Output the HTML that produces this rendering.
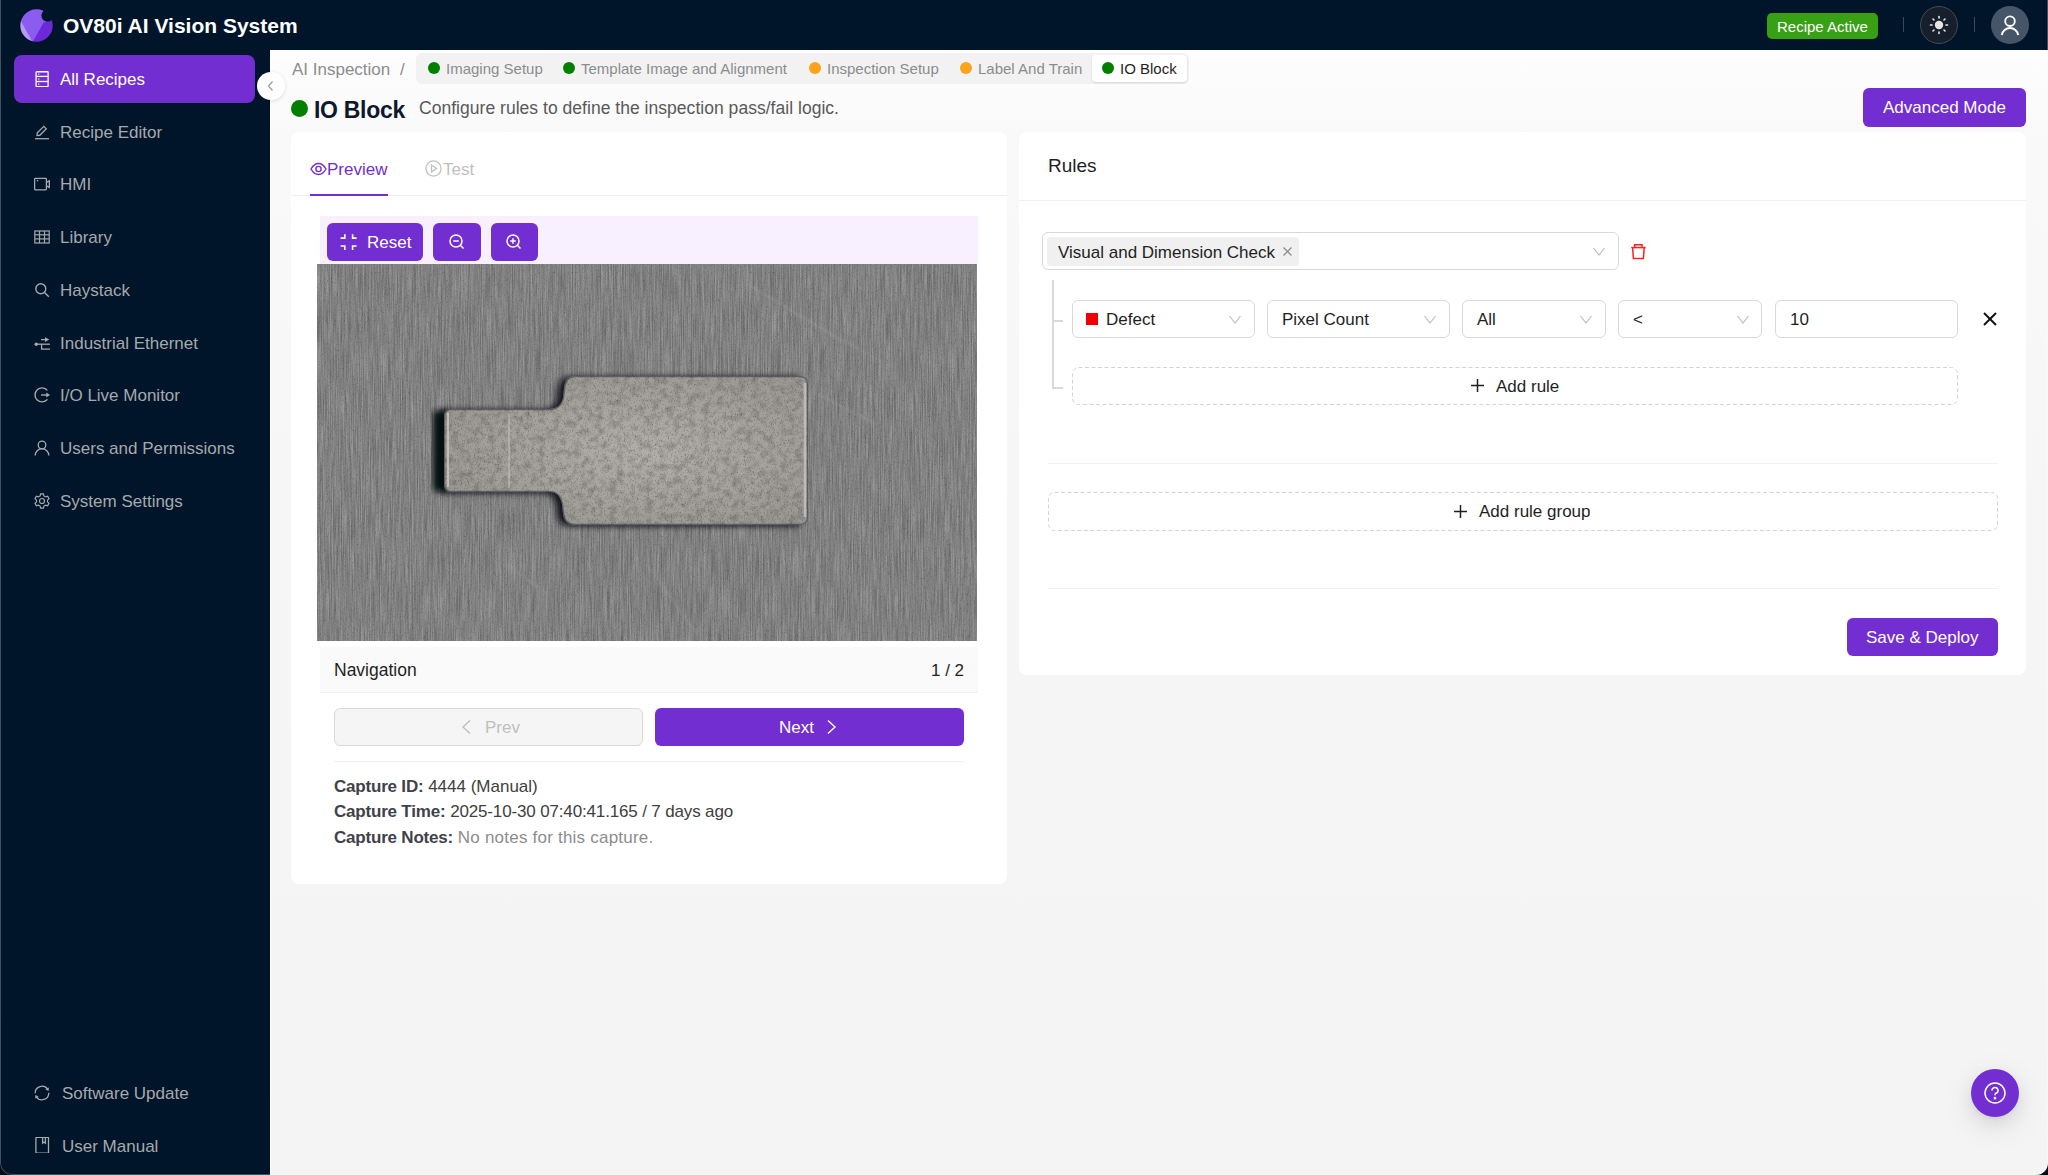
<!DOCTYPE html>
<html><head><meta charset="utf-8">
<style>
*{box-sizing:border-box;margin:0;padding:0}
html,body{width:2048px;height:1175px;overflow:hidden;background:#070b14}
body{font-family:"Liberation Sans",sans-serif;position:relative;color:rgba(0,0,0,0.88)}
.abs{position:absolute}
#frame{position:absolute;left:0;top:0;width:2048px;height:1175px;overflow:hidden;border-radius:0 0 12px 12px;background:#001529}
#wborder{position:absolute;left:0;top:0;width:2048px;height:1175px;border:1px solid rgba(255,255,255,0.25);border-top:none;border-radius:0 0 12px 12px;z-index:50;pointer-events:none}
#edgeL{position:absolute;left:0;top:0;width:2px;height:1175px;background:#4a4f55}
#edgeR{position:absolute;right:0;top:0;width:2px;height:50px;background:#4a4f55}
#header{position:absolute;left:0;top:0;width:2048px;height:50px;background:#001529}
#main{position:absolute;left:270px;top:50px;width:1778px;height:1125px;background:linear-gradient(#ffffff 0px,#fdfdfd 12px,#f9f9f9 85px,#f6f6f6 450px,#f4f4f4 1125px);border-left:1px solid #fff;border-top:1px solid #fff}
.menu{position:absolute;left:14px;width:241px;height:48px;border-radius:8px;color:#a6a9ad;font-size:17px}
.menu .ic{position:absolute;left:20px;top:16px;width:16px;height:16px}
.menu .tx{position:absolute;left:46px;top:15px;line-height:20px;white-space:nowrap}
.menu.active{background:#722ed1;color:#fff}
.t{position:absolute;white-space:nowrap;line-height:1}
.card{position:absolute;background:#fff;border-radius:8px}
.btnp{position:absolute;background:#722ed1;border-radius:6px;color:#fff}
.sel{position:absolute;height:38px;border:1px solid #d9d9d9;border-radius:6px;background:#fff}
.chev{position:absolute;width:12px;height:9px}
.dot{position:absolute;border-radius:50%}
</style></head><body>
<div id="frame">
<div id="header">
  <svg class="abs" style="left:19.5px;top:8.5px" width="33" height="33" viewBox="0 0 33 33">
    <defs><mask id="lm"><rect width="33" height="33" fill="#000"/><circle cx="16.5" cy="16.5" r="16.2" fill="#fff"/><circle cx="27.6" cy="6.6" r="6.2" fill="#000"/></mask></defs>
    <g mask="url(#lm)">
      <rect width="33" height="33" fill="#8b5cf0"/>
      <path d="M0 10.5 L12.5 33 L0 33Z" fill="#b89af2"/>
      <path d="M33 11 L33 33 L12.6 33 L23.6 13.4Z" fill="#6d28d9"/>
    </g>
  </svg>
  <div class="t" style="left:63px;top:15px;font-size:21px;font-weight:700;color:#fff">OV80i AI Vision System</div>
  <div class="abs" style="left:1767px;top:13px;width:111px;height:26px;background:#38a014;border-radius:5px"></div>
  <div class="t" style="left:1777px;top:18.5px;font-size:15px;color:#fff">Recipe Active</div>
  <div class="abs" style="left:1903px;top:17px;width:1px;height:15px;background:#3b4756"></div>
  <div class="abs" style="left:1920px;top:6px;width:38px;height:38px;border-radius:50%;background:#161f2b;border:1px solid #454b53"></div>
  <svg class="abs" style="left:1928px;top:14px" width="22" height="22" viewBox="0 0 22 22">
    <circle cx="11" cy="11" r="4.2" fill="#e5e5e5"/>
    <g stroke="#e5e5e5" stroke-width="1.6" stroke-linecap="round">
      <line x1="11" y1="2.5" x2="11" y2="4"/><line x1="11" y1="18" x2="11" y2="19.5"/>
      <line x1="2.5" y1="11" x2="4" y2="11"/><line x1="18" y1="11" x2="19.5" y2="11"/>
      <line x1="5" y1="5" x2="6" y2="6"/><line x1="16" y1="16" x2="17" y2="17"/>
      <line x1="17" y1="5" x2="16" y2="6"/><line x1="5" y1="17" x2="6" y2="16"/>
    </g>
  </svg>
  <div class="abs" style="left:1974px;top:17px;width:1px;height:15px;background:#3b4756"></div>
  <div class="abs" style="left:1991px;top:6px;width:38px;height:38px;border-radius:50%;background:#475569"></div>
  <svg class="abs" style="left:1998px;top:13px" width="24" height="24" viewBox="0 0 24 24" fill="none" stroke="#fff" stroke-width="1.9">
    <circle cx="12" cy="8.2" r="4.8"/>
    <path d="M3.8 22 A8.3 8.3 0 0 1 20.2 22"/>
  </svg>
</div>



<!-- sidebar menu -->
<div class="menu active" style="top:55px">
  <svg class="ic" viewBox="0 0 16 16" fill="none" stroke="#fff" stroke-width="1.3"><rect x="2.1" y="0.75" width="12" height="14.8" rx="0.6"/><line x1="2.1" y1="5.4" x2="14.1" y2="5.4"/><line x1="2.1" y1="10.5" x2="14.1" y2="10.5"/><path d="M4.3 2.2 L5.8 3.1 L4.3 4Z" fill="#fff" stroke="none"/><path d="M4.3 7.2 L5.8 8.1 L4.3 9Z" fill="#fff" stroke="none"/><path d="M4.3 12.2 L5.8 13.1 L4.3 14Z" fill="#fff" stroke="none"/></svg>
  <div class="tx">All Recipes</div>
</div>
<div class="menu" style="top:107.7px">
  <svg class="ic" viewBox="0 0 16 16" fill="none" stroke="#a6a9ad" stroke-width="1.3"><path d="M3 11.5 L3.3 8.8 L9.8 2.3 L12.3 4.8 L5.8 11.3Z"/><line x1="1" y1="14.7" x2="15" y2="14.7"/></svg>
  <div class="tx">Recipe Editor</div>
</div>
<div class="menu" style="top:160.4px">
  <svg class="ic" viewBox="0 0 16 16" fill="none" stroke="#a6a9ad" stroke-width="1.3"><rect x="0.6" y="2.3" width="11.8" height="11.6" rx="0.8"/><path d="M12.4 6.3 L15.3 4.8 L15.3 11.4 L12.4 9.9"/><path d="M2.8 4.6 L4.2 4.6" stroke-width="1.5"/></svg>
  <div class="tx">HMI</div>
</div>
<div class="menu" style="top:213.1px">
  <svg class="ic" viewBox="0 0 16 16" fill="none" stroke="#a6a9ad" stroke-width="1.2"><rect x="0.8" y="2" width="14.4" height="12"/><line x1="0.8" y1="5.8" x2="15.2" y2="5.8"/><line x1="0.8" y1="9.9" x2="15.2" y2="9.9"/><line x1="5.5" y1="2" x2="5.5" y2="14"/><line x1="10.5" y1="2" x2="10.5" y2="14"/></svg>
  <div class="tx">Library</div>
</div>
<div class="menu" style="top:265.8px">
  <svg class="ic" viewBox="0 0 16 16" fill="none" stroke="#a6a9ad" stroke-width="1.4"><circle cx="6.8" cy="6.8" r="5"/><line x1="10.5" y1="10.5" x2="14.8" y2="14.8"/></svg>
  <div class="tx">Haystack</div>
</div>
<div class="menu" style="top:318.5px">
  <svg class="ic" viewBox="0 0 16 16" fill="none" stroke="#a6a9ad" stroke-width="1.3"><line x1="7" y1="4.6" x2="12" y2="4.6"/><path d="M11 2.2 L15.3 4.6 L11 7Z" fill="#a6a9ad" stroke="none"/><line x1="2.5" y1="9.2" x2="16" y2="9.2"/><circle cx="2.2" cy="9.2" r="1.7" fill="#a6a9ad" stroke="none"/><path d="M7.6 9.2 V14.1 H16"/></svg>
  <div class="tx">Industrial Ethernet</div>
</div>
<div class="menu" style="top:371.2px">
  <svg class="ic" viewBox="0 0 16 16" fill="none" stroke="#a6a9ad" stroke-width="1.4"><path d="M13.4 3.4 A7 7 0 1 0 13.4 12.4"/><line x1="7" y1="8" x2="13" y2="8"/><path d="M12.3 5.6 L16 8 L12.3 10.4Z" fill="#a6a9ad" stroke="none"/></svg>
  <div class="tx">I/O Live Monitor</div>
</div>
<div class="menu" style="top:423.9px">
  <svg class="ic" viewBox="0 0 16 16" fill="none" stroke="#a6a9ad" stroke-width="1.3"><circle cx="8" cy="5" r="3.8"/><path d="M1.2 15.5 A6.8 6.8 0 0 1 14.8 15.5"/></svg>
  <div class="tx">Users and Permissions</div>
</div>
<div class="menu" style="top:476.6px">
  <svg class="ic" viewBox="0 0 16 16" fill="none" stroke="#a6a9ad" stroke-width="1.2"><path d="M6.6 0.9 H9.4 L9.9 2.9 L11.6 3.9 L13.6 3.3 L15 5.7 L13.5 7.2 V8.8 L15 10.3 L13.6 12.7 L11.6 12.1 L9.9 13.1 L9.4 15.1 H6.6 L6.1 13.1 L4.4 12.1 L2.4 12.7 L1 10.3 L2.5 8.8 V7.2 L1 5.7 L2.4 3.3 L4.4 3.9 L6.1 2.9Z"/><circle cx="8" cy="8" r="2.5"/></svg>
  <div class="tx">System Settings</div>
</div>
<div class="menu" style="top:1069px">
  <svg class="ic" viewBox="0 0 16 16" fill="none" stroke="#a6a9ad" stroke-width="1.3"><path d="M1.2 8.2 A6.8 6.8 0 0 1 13.6 4.2"/><path d="M14.8 7.8 A6.8 6.8 0 0 1 2.4 11.8"/><path d="M14.9 2.4 L14.6 5.9 L11.4 4.6Z" fill="#a6a9ad" stroke="none"/><path d="M1.1 13.6 L1.4 10.1 L4.6 11.4Z" fill="#a6a9ad" stroke="none"/></svg>
  <div class="tx" style="left:48px">Software Update</div>
</div>
<div class="menu" style="top:1122px">
  <svg class="ic" style="top:15px" viewBox="0 0 16 16" fill="none" stroke="#a6a9ad" stroke-width="1.3"><rect x="1.9" y="0.3" width="12.6" height="15.9" rx="0.8"/><path d="M8.6 0.3 V6.2 L10 5 L11.4 6.2 V0.3"/></svg>
  <div class="tx" style="left:48px">User Manual</div>
</div>

<div id="main"></div>

<!-- collapse button -->
<div class="abs" style="left:257px;top:72px;width:28px;height:28px;border-radius:50%;background:#fff;box-shadow:0 1px 4px rgba(0,0,0,0.12)"></div>
<svg class="abs" style="left:265px;top:80px" width="12" height="12" viewBox="0 0 12 12" fill="none" stroke="#9a9a9a" stroke-width="1.2"><path d="M7.5 1.5 L3.5 6 L7.5 10.5"/></svg>

<!-- breadcrumb -->
<div class="t" style="left:292px;top:61px;font-size:17px;color:#8c8c8c">AI Inspection</div>
<div class="t" style="left:400px;top:61px;font-size:17px;color:#8c8c8c">/</div>
<div class="abs" style="left:416px;top:53px;width:773px;height:31px;background:#f2f2f2;border-radius:6px"></div>
<div class="abs" style="left:1092px;top:55px;width:95px;height:27px;background:#fff;border-radius:4px;box-shadow:0 1px 2px rgba(0,0,0,0.08),0 1px 3px rgba(0,0,0,0.05)"></div>
<div class="dot" style="left:427.5px;top:62px;width:12px;height:12px;background:#008000"></div>
<div class="t" style="left:446px;top:60.5px;font-size:15px;color:#8c8c8c">Imaging Setup</div>
<div class="dot" style="left:562.5px;top:62px;width:12px;height:12px;background:#008000"></div>
<div class="t" style="left:581px;top:60.5px;font-size:15px;color:#8c8c8c">Template Image and Alignment</div>
<div class="dot" style="left:808.5px;top:62px;width:12px;height:12px;background:#faa31b"></div>
<div class="t" style="left:827px;top:60.5px;font-size:15px;color:#8c8c8c">Inspection Setup</div>
<div class="dot" style="left:959.5px;top:62px;width:12px;height:12px;background:#faa31b"></div>
<div class="t" style="left:978px;top:60.5px;font-size:15px;color:#8c8c8c">Label And Train</div>
<div class="dot" style="left:1102px;top:62px;width:12px;height:12px;background:#008000"></div>
<div class="t" style="left:1120px;top:60.5px;font-size:15px;color:#1f1f1f">IO Block</div>

<!-- title -->
<div class="dot" style="left:291px;top:100px;width:17px;height:17px;background:#008000"></div>
<div class="t" style="left:314px;top:99px;font-size:23px;font-weight:700;color:#0f172a;letter-spacing:-0.3px">IO Block</div>
<div class="t" style="left:419px;top:100px;font-size:17.5px;color:#595959;letter-spacing:0.03px">Configure rules to define the inspection pass/fail logic.</div>
<div class="btnp" style="left:1863px;top:88px;width:163px;height:39px"></div>
<div class="t" style="left:1883px;top:99px;font-size:17px;color:#fff">Advanced Mode</div>

<!-- left card -->
<div class="card" style="left:291px;top:132px;width:716px;height:752px"></div>
<svg class="abs" style="left:310px;top:161px" width="17" height="16" viewBox="0 0 17 16" fill="none" stroke="#722ed1" stroke-width="1.4"><path d="M1 8 C3.5 3.5 6 2.5 8.5 2.5 C11 2.5 13.5 3.5 16 8 C13.5 12.5 11 13.5 8.5 13.5 C6 13.5 3.5 12.5 1 8Z"/><circle cx="8.5" cy="8" r="2.6"/></svg>
<div class="t" style="left:327px;top:161px;font-size:17px;color:#722ed1">Preview</div>
<svg class="abs" style="left:425px;top:160px" width="17" height="17" viewBox="0 0 17 17" fill="none" stroke="#bfbfbf" stroke-width="1.3"><circle cx="8.5" cy="8.5" r="7.6"/><path d="M6.5 5 L11.5 8.5 L6.5 12Z"/></svg>
<div class="t" style="left:443px;top:161px;font-size:17px;color:#bfbfbf">Test</div>
<div class="abs" style="left:291px;top:195px;width:716px;height:1px;background:#f0f0f0"></div>
<div class="abs" style="left:310px;top:193.5px;width:78px;height:2.5px;background:#722ed1"></div>

<div class="abs" style="left:320px;top:216px;width:658px;height:48px;background:#f9f0ff"></div>
<div class="btnp" style="left:327px;top:223px;width:96px;height:38px"></div>
<svg class="abs" style="left:339px;top:233px" width="18" height="18" viewBox="0 0 18 18" fill="none" stroke="#fff" stroke-width="1.6"><path d="M5.8 1.2 V5.1 H1.6"/><path d="M13.6 1.2 V5.1 H17.6"/><path d="M5.8 16.9 V13 H1.6"/><path d="M13.6 16.9 V13 H17.6"/></svg>
<div class="t" style="left:367px;top:234px;font-size:17px;color:#fff">Reset</div>
<div class="btnp" style="left:433px;top:223px;width:48px;height:38px"></div>
<svg class="abs" style="left:448px;top:233px" width="18" height="18" viewBox="0 0 18 18" fill="none" stroke="#fff" stroke-width="1.5"><circle cx="8" cy="8" r="6"/><line x1="5.2" y1="8" x2="10.8" y2="8"/><line x1="12.3" y1="12.3" x2="15.5" y2="15.5"/></svg>
<div class="btnp" style="left:491px;top:223px;width:47px;height:38px"></div>
<svg class="abs" style="left:505px;top:233px" width="18" height="18" viewBox="0 0 18 18" fill="none" stroke="#fff" stroke-width="1.5"><circle cx="8" cy="8" r="6"/><line x1="5.2" y1="8" x2="10.8" y2="8"/><line x1="8" y1="5.2" x2="8" y2="10.8"/><line x1="12.3" y1="12.3" x2="15.5" y2="15.5"/></svg>

<!-- image -->
<svg class="abs" style="left:317px;top:264px" width="660" height="377" viewBox="0 0 660 377">
  <defs>
    <filter id="streak" x="0" y="0" width="100%" height="100%" color-interpolation-filters="sRGB">
      <feTurbulence type="fractalNoise" baseFrequency="0.9 0.025" numOctaves="3" seed="5"/>
      <feColorMatrix type="matrix" values="1.6 0 0 0 -0.3  1.6 0 0 0 -0.3  1.6 0 0 0 -0.3  0 0 0 0 1"/>
    </filter>
    <filter id="speck" x="0" y="0" width="100%" height="100%" color-interpolation-filters="sRGB">
      <feTurbulence type="fractalNoise" baseFrequency="1.3 0.5" numOctaves="2" seed="11" result="n"/>
      <feColorMatrix in="n" type="matrix" values="0 0 0 0 0.12  0 0 0 0 0.12  0 0 0 0 0.12  0 0 0 -2.2 1.05"/>
    </filter>
    <filter id="grain" x="0" y="0" width="100%" height="100%">
      <feTurbulence type="fractalNoise" baseFrequency="0.7" numOctaves="2" seed="7"/>
      <feColorMatrix values="0 0 0 0 0.3  0 0 0 0 0.3  0 0 0 0 0.3  0 0 0 1.6 -0.55"/>
      <feComposite in2="SourceGraphic" operator="in"/>
    </filter>
    <filter id="mottle" x="0" y="0" width="100%" height="100%" color-interpolation-filters="sRGB">
      <feTurbulence type="fractalNoise" baseFrequency="0.14" numOctaves="3" seed="2"/>
      <feColorMatrix type="matrix" values="0 0 0 0 0.25  0 0 0 0 0.24  0 0 0 0 0.23  -2.5 0 0 0 1.45"/>
    </filter>
    <filter id="blur1"><feGaussianBlur stdDeviation="0.8"/></filter>
    <filter id="blur2"><feGaussianBlur stdDeviation="3"/></filter>
    <radialGradient id="pg" cx="0.55" cy="0.5" r="0.6">
      <stop offset="0" stop-color="#b3b0aa"/><stop offset="1" stop-color="#9c9994"/>
    </radialGradient>
    
  </defs>
  <rect width="660" height="377" fill="#848484"/>
  <rect width="660" height="377" filter="url(#streak)" opacity="0.16"/>
  <rect width="660" height="377" filter="url(#speck)" opacity="0.3"/>
  <path d="M134 145 C129 145 127 148 127 153 L127 220 C127 225 129 228 134 228 L232 228 C240 228 243 232 245 240 L246 250 C247 257 251 261 258 261 L483 261 C488 261 491 258 491 253 L491 120 C491 115 488 112 483 112 L258 112 C251 112 248 116 247 124 L246 134 C244 141 240 145 232 145Z" fill="#0a0e16" transform="translate(-6,1)" opacity="0.95" filter="url(#blur2)"/>
  <rect x="116" y="147" width="14" height="80" fill="#05080e" filter="url(#blur2)" opacity="0.9"/>
  <path d="M134 145 C129 145 127 148 127 153 L127 220 C127 225 129 228 134 228 L232 228 C240 228 243 232 245 240 L246 250 C247 257 251 261 258 261 L483 261 C488 261 491 258 491 253 L491 120 C491 115 488 112 483 112 L258 112 C251 112 248 116 247 124 L246 134 C244 141 240 145 232 145Z" fill="url(#pg)"/>
  <clipPath id="pc"><path d="M134 145 C129 145 127 148 127 153 L127 220 C127 225 129 228 134 228 L232 228 C240 228 243 232 245 240 L246 250 C247 257 251 261 258 261 L483 261 C488 261 491 258 491 253 L491 120 C491 115 488 112 483 112 L258 112 C251 112 248 116 247 124 L246 134 C244 141 240 145 232 145Z"/></clipPath>
  <rect width="660" height="377" filter="url(#mottle)" opacity="0.28" clip-path="url(#pc)"/>
  <rect width="660" height="377" filter="url(#speck)" opacity="0.4" clip-path="url(#pc)"/>
  <path d="M134 145 C129 145 127 148 127 153 L127 220 C127 225 129 228 134 228 L232 228 C240 228 243 232 245 240 L246 250 C247 257 251 261 258 261 L483 261 C488 261 491 258 491 253 L491 120 C491 115 488 112 483 112 L258 112 C251 112 248 116 247 124 L246 134 C244 141 240 145 232 145Z" fill="none" stroke="#2e3136" stroke-width="2.5" opacity="0.55" clip-path="url(#pc)"/>
  <line x1="131" y1="149" x2="131" y2="223" stroke="#cfcbc5" stroke-width="1.5"/>
  <line x1="192" y1="150" x2="192" y2="224" stroke="#c6c2bc" stroke-width="1"/>
  <path d="M488 119 L488 253" stroke="#c9c6c1" stroke-width="2.5" opacity="0.8"/>
  <g stroke="#a9abad" stroke-width="2" opacity="0.28" fill="none" filter="url(#blur1)">
    <path d="M430 20 L530 80"/><path d="M470 45 L560 95"/><path d="M500 130 L560 160"/><path d="M330 300 L380 370"/><path d="M190 300 L230 330"/>
  </g>
</svg>

<!-- navigation -->
<div class="abs" style="left:320px;top:647px;width:658px;height:46px;background:#fafafa;border-bottom:1px solid #f0f0f0"></div>
<div class="t" style="left:334px;top:662px;font-size:17.5px;color:#1f1f1f">Navigation</div>
<div class="t" style="left:931px;top:662px;font-size:17px;color:#1f1f1f">1 / 2</div>
<div class="abs" style="left:334px;top:708px;width:309px;height:38px;background:#f5f5f5;border:1px solid #d9d9d9;border-radius:6px"></div>
<svg class="abs" style="left:459px;top:719px" width="14" height="16" viewBox="0 0 14 16" fill="none" stroke="#bfbfbf" stroke-width="1.4"><path d="M11 1.5 L4 8 L11 14.5"/></svg>
<div class="t" style="left:485px;top:719px;font-size:17px;color:#bfbfbf">Prev</div>
<div class="btnp" style="left:655px;top:708px;width:309px;height:38px"></div>
<div class="t" style="left:779px;top:719px;font-size:17px;color:#fff">Next</div>
<svg class="abs" style="left:825px;top:719px" width="14" height="16" viewBox="0 0 14 16" fill="none" stroke="#fff" stroke-width="1.4"><path d="M3 1.5 L10 8 L3 14.5"/></svg>
<div class="abs" style="left:334px;top:761px;width:630px;height:1px;background:#f0f0f0"></div>
<div class="t" style="left:334px;top:778px;font-size:17px;color:#404040"><b style="color:#3f4249;letter-spacing:-0.2px">Capture ID:</b> 4444 (Manual)</div>
<div class="t" style="left:334px;top:803px;font-size:17px;color:#404040"><b style="color:#3f4249;letter-spacing:-0.2px">Capture Time:</b> <span style="letter-spacing:-0.15px">2025-10-30 07:40:41.165 / 7 days ago</span></div>
<div class="t" style="left:334px;top:829px;font-size:17px;color:#8c8c8c"><b style="color:#3f4249;letter-spacing:-0.2px">Capture Notes:</b> <span style="letter-spacing:0.22px">No notes for this capture.</span></div>

<!-- right card -->
<div class="card" style="left:1019px;top:132px;width:1007px;height:543px"></div>
<div class="t" style="left:1048px;top:156px;font-size:19px;color:#1f1f1f">Rules</div>
<div class="abs" style="left:1019px;top:200px;width:1007px;height:1px;background:#f0f0f0"></div>

<div class="sel" style="left:1042px;top:232px;width:577px"></div>
<div class="abs" style="left:1047px;top:237px;width:252px;height:29px;background:#f0f0f0;border-radius:4px"></div>
<div class="t" style="left:1058px;top:243.5px;font-size:17px;color:#1f1f1f">Visual and Dimension Check</div>
<svg class="abs" style="left:1282px;top:246px" width="11" height="11" viewBox="0 0 11 11" stroke="#8c8c8c" stroke-width="1.2"><line x1="1.5" y1="1.5" x2="9.5" y2="9.5"/><line x1="9.5" y1="1.5" x2="1.5" y2="9.5"/></svg>
<svg class="chev" style="left:1593px;top:247px" viewBox="0 0 12 9" fill="none" stroke="#bfbfbf" stroke-width="1.2"><path d="M0.5 1 L6 8 L11.5 1"/></svg>
<svg class="abs" style="left:1630px;top:243px" width="16" height="17" viewBox="0 0 16 17" fill="none" stroke="#ff2020" stroke-width="1.5"><path d="M1.2 4.6 H15.6"/><path d="M4.6 4.6 V1.8 H12 V4.6"/><path d="M2.6 4.6 L3.4 15.4 H13.4 L14.2 4.6"/></svg>

<!-- tree lines -->
<div class="abs" style="left:1052px;top:280px;width:2px;height:109px;background:#d9d9d9"></div>
<div class="abs" style="left:1052px;top:320px;width:11px;height:2px;background:#d9d9d9"></div>
<div class="abs" style="left:1052px;top:387px;width:11px;height:2px;background:#d9d9d9"></div>

<div class="sel" style="left:1072px;top:300px;width:183px"></div>
<div class="abs" style="left:1086px;top:313px;width:12px;height:12px;background:#f00000"></div>
<div class="t" style="left:1106px;top:310.5px;font-size:17px;color:#1f1f1f">Defect</div>
<svg class="chev" style="left:1229px;top:315px" viewBox="0 0 12 9" fill="none" stroke="#bfbfbf" stroke-width="1.2"><path d="M0.5 1 L6 8 L11.5 1"/></svg>
<div class="sel" style="left:1267px;top:300px;width:183px"></div>
<div class="t" style="left:1282px;top:310.5px;font-size:17px;color:#1f1f1f">Pixel Count</div>
<svg class="chev" style="left:1424px;top:315px" viewBox="0 0 12 9" fill="none" stroke="#bfbfbf" stroke-width="1.2"><path d="M0.5 1 L6 8 L11.5 1"/></svg>
<div class="sel" style="left:1462px;top:300px;width:144px"></div>
<div class="t" style="left:1477px;top:310.5px;font-size:17px;color:#1f1f1f">All</div>
<svg class="chev" style="left:1580px;top:315px" viewBox="0 0 12 9" fill="none" stroke="#bfbfbf" stroke-width="1.2"><path d="M0.5 1 L6 8 L11.5 1"/></svg>
<div class="sel" style="left:1618px;top:300px;width:144px"></div>
<div class="t" style="left:1633px;top:310.5px;font-size:17px;color:#1f1f1f">&lt;</div>
<svg class="chev" style="left:1737px;top:315px" viewBox="0 0 12 9" fill="none" stroke="#bfbfbf" stroke-width="1.2"><path d="M0.5 1 L6 8 L11.5 1"/></svg>
<div class="sel" style="left:1775px;top:300px;width:183px"></div>
<div class="t" style="left:1790px;top:310.5px;font-size:17px;color:#1f1f1f">10</div>
<svg class="abs" style="left:1982px;top:311px" width="16" height="16" viewBox="0 0 16 16" stroke="#111" stroke-width="2"><line x1="2" y1="2" x2="14" y2="14"/><line x1="14" y1="2" x2="2" y2="14"/></svg>

<svg class="abs" style="left:1072px;top:367px" width="886" height="38"><rect x="0.5" y="0.5" width="885" height="37" rx="6" fill="none" stroke="#d4d4d4" stroke-dasharray="4 2.5"/></svg>
<svg class="abs" style="left:1470px;top:378px" width="15" height="15" viewBox="0 0 15 15" stroke="#1f1f1f" stroke-width="1.5"><line x1="7.5" y1="1" x2="7.5" y2="14"/><line x1="1" y1="7.5" x2="14" y2="7.5"/></svg>
<div class="t" style="left:1496px;top:378px;font-size:17px;color:#1f1f1f">Add rule</div>

<div class="abs" style="left:1048px;top:463px;width:950px;height:1px;background:#f0f0f0"></div>
<svg class="abs" style="left:1048px;top:492px" width="950" height="39"><rect x="0.5" y="0.5" width="949" height="38" rx="6" fill="none" stroke="#d4d4d4" stroke-dasharray="4 2.5"/></svg>
<svg class="abs" style="left:1453px;top:504px" width="15" height="15" viewBox="0 0 15 15" stroke="#1f1f1f" stroke-width="1.5"><line x1="7.5" y1="1" x2="7.5" y2="14"/><line x1="1" y1="7.5" x2="14" y2="7.5"/></svg>
<div class="t" style="left:1479px;top:503px;font-size:17px;color:#1f1f1f">Add rule group</div>
<div class="abs" style="left:1048px;top:588px;width:950px;height:1px;background:#f0f0f0"></div>
<div class="btnp" style="left:1847px;top:618px;width:151px;height:38px"></div>
<div class="t" style="left:1866px;top:629px;font-size:17px;color:#fff">Save &amp; Deploy</div>

<div id="wborder"></div>
<!-- help fab -->
<div class="abs" style="left:1971px;top:1069px;width:48px;height:48px;border-radius:50%;background:#722ed1;box-shadow:0 6px 16px rgba(0,0,0,0.08),0 3px 6px -4px rgba(0,0,0,0.12),0 9px 28px 8px rgba(0,0,0,0.05)"></div>
<svg class="abs" style="left:1984px;top:1082px" width="22" height="22" viewBox="0 0 22 22" fill="none" stroke="#fff" stroke-width="1.5"><circle cx="11" cy="11" r="10"/><path d="M8 8.5 A3 3 0 1 1 11.8 11.3 C11 11.6 11 12.2 11 13.2"/><circle cx="11" cy="16.2" r="0.6" fill="#fff"/></svg>
</div>
</body></html>
